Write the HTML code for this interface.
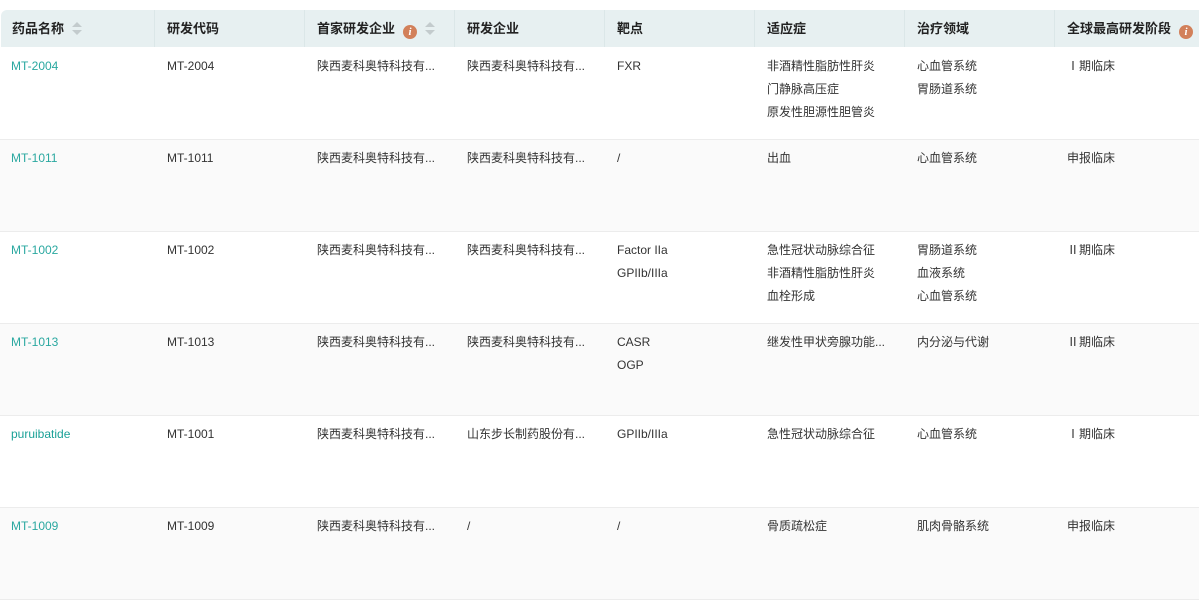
<!DOCTYPE html>
<html><head><meta charset="utf-8"><style>
body{margin:0;width:1199px;height:551px;overflow:hidden;background:#fff;font-family:"Liberation Sans","Noto Sans CJK SC",sans-serif;font-size:12px;color:#333}
.hd{position:absolute;left:1px;top:10px;width:1198px;height:37px;background:#e7f0f1;border-radius:6px 0 0 0}
.hc{position:absolute;top:0;height:37px;line-height:37px;font-weight:bold;font-size:13px;color:#222}
.sep{position:absolute;top:0;width:1px;height:37px;background:#dbe7e8}
.row{position:absolute;left:0;width:1199px;height:91px;border-bottom:1px solid #ececec}
.c{position:absolute;top:7px;line-height:23px;white-space:nowrap}
a{color:#2aa8a0;text-decoration:none}
.i{display:inline-block;width:14px;height:14px;border-radius:50%;background:#d2805a;color:#fff;font-size:11px;line-height:14px;text-align:center;font-style:italic;font-weight:bold;vertical-align:-2px;font-family:"Liberation Serif",serif;margin-left:4px}
.s{display:inline-block;width:10px;height:14px;position:relative;vertical-align:-3px}
.s:before,.s:after{content:"";position:absolute;left:0;border-left:5px solid transparent;border-right:5px solid transparent}
.s:before{top:0;border-bottom:5px solid #c3cbcd}
.s:after{top:8px;border-top:5px solid #c3cbcd}
</style></head><body>
<div class="hd">
<div class="hc" style="left:11px">药品名称<span class="s" style="margin-left:8px"></span></div>
<div class="sep" style="left:153px"></div>
<div class="hc" style="left:166px">研发代码</div>
<div class="sep" style="left:303px"></div>
<div class="hc" style="left:316px">首家研发企业<span class="i" style="margin-left:8px">i</span><span class="s" style="margin-left:8px"></span></div>
<div class="sep" style="left:453px"></div>
<div class="hc" style="left:466px">研发企业</div>
<div class="sep" style="left:603px"></div>
<div class="hc" style="left:616px">靶点</div>
<div class="sep" style="left:753px"></div>
<div class="hc" style="left:766px">适应症</div>
<div class="sep" style="left:903px"></div>
<div class="hc" style="left:916px">治疗领域</div>
<div class="sep" style="left:1053px"></div>
<div class="hc" style="left:1066px">全球最高研发阶段<span class="i" style="margin-left:8px">i</span></div>
</div>

<div class="row" style="top:48px;background:#fff">
<div class="c" style="left:11px"><a>MT-2004</a></div><div class="c" style="left:167px">MT-2004</div>
<div class="c" style="left:317px">陕西麦科奥特科技有...</div><div class="c" style="left:467px">陕西麦科奥特科技有...</div>
<div class="c" style="left:617px">FXR</div>
<div class="c" style="left:767px">非酒精性脂肪性肝炎<br>门静脉高压症<br>原发性胆源性胆管炎</div>
<div class="c" style="left:917px">心血管系统<br>胃肠道系统</div><div class="c" style="left:1067px">Ⅰ期临床</div>
</div>
<div class="row" style="top:140px;background:#fafafa">
<div class="c" style="left:11px"><a>MT-1011</a></div><div class="c" style="left:167px">MT-1011</div>
<div class="c" style="left:317px">陕西麦科奥特科技有...</div><div class="c" style="left:467px">陕西麦科奥特科技有...</div>
<div class="c" style="left:617px">/</div><div class="c" style="left:767px">出血</div>
<div class="c" style="left:917px">心血管系统</div><div class="c" style="left:1067px">申报临床</div>
</div>
<div class="row" style="top:232px;background:#fff">
<div class="c" style="left:11px"><a>MT-1002</a></div><div class="c" style="left:167px">MT-1002</div>
<div class="c" style="left:317px">陕西麦科奥特科技有...</div><div class="c" style="left:467px">陕西麦科奥特科技有...</div>
<div class="c" style="left:617px">Factor IIa<br>GPIIb/IIIa</div>
<div class="c" style="left:767px">急性冠状动脉综合征<br>非酒精性脂肪性肝炎<br>血栓形成</div>
<div class="c" style="left:917px">胃肠道系统<br>血液系统<br>心血管系统</div><div class="c" style="left:1067px">Ⅱ期临床</div>
</div>
<div class="row" style="top:324px;background:#fafafa">
<div class="c" style="left:11px"><a>MT-1013</a></div><div class="c" style="left:167px">MT-1013</div>
<div class="c" style="left:317px">陕西麦科奥特科技有...</div><div class="c" style="left:467px">陕西麦科奥特科技有...</div>
<div class="c" style="left:617px">CASR<br>OGP</div><div class="c" style="left:767px">继发性甲状旁腺功能...</div>
<div class="c" style="left:917px">内分泌与代谢</div><div class="c" style="left:1067px">Ⅱ期临床</div>
</div>
<div class="row" style="top:416px;background:#fff">
<div class="c" style="left:11px"><a style="color:#1aa197">puruibatide</a></div><div class="c" style="left:167px">MT-1001</div>
<div class="c" style="left:317px">陕西麦科奥特科技有...</div><div class="c" style="left:467px">山东步长制药股份有...</div>
<div class="c" style="left:617px">GPIIb/IIIa</div><div class="c" style="left:767px">急性冠状动脉综合征</div>
<div class="c" style="left:917px">心血管系统</div><div class="c" style="left:1067px">Ⅰ期临床</div>
</div>
<div class="row" style="top:508px;background:#fafafa">
<div class="c" style="left:11px"><a>MT-1009</a></div><div class="c" style="left:167px">MT-1009</div>
<div class="c" style="left:317px">陕西麦科奥特科技有...</div><div class="c" style="left:467px">/</div>
<div class="c" style="left:617px">/</div><div class="c" style="left:767px">骨质疏松症</div>
<div class="c" style="left:917px">肌肉骨骼系统</div><div class="c" style="left:1067px">申报临床</div>
</div>
</body></html>
